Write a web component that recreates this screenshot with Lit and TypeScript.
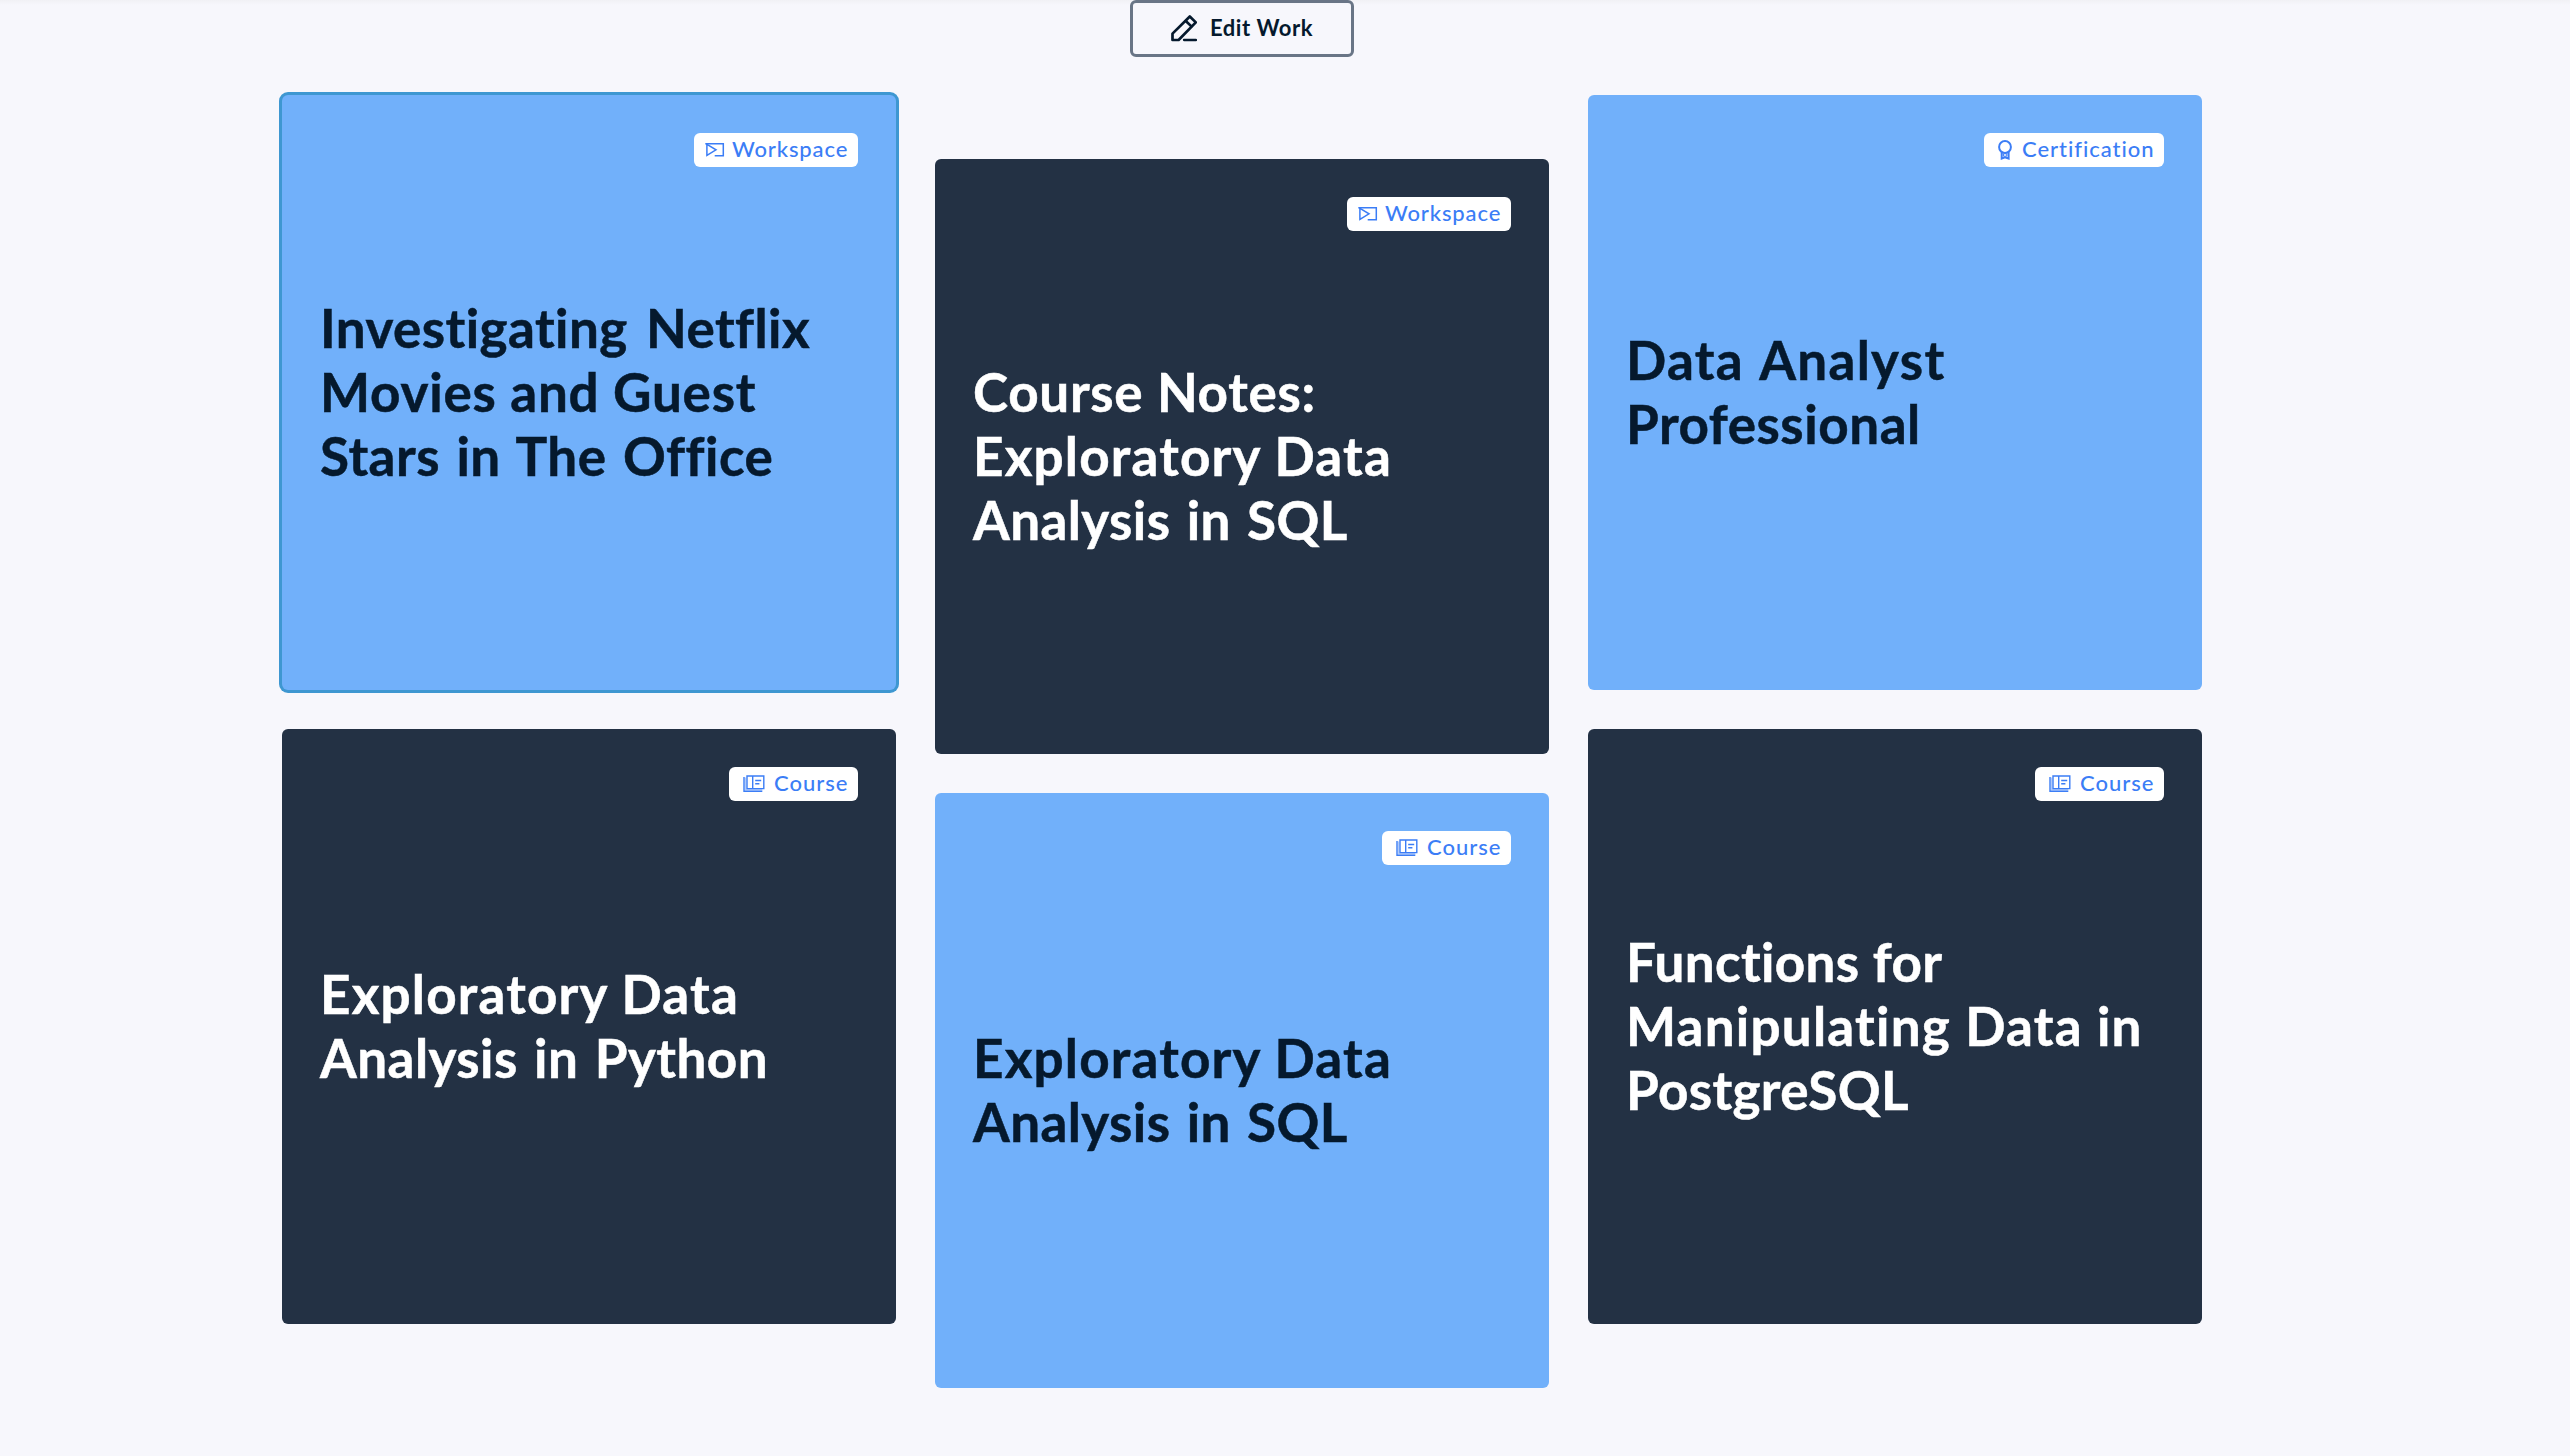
import { LitElement, html, css, svg } from "lit";
import { customElement, property } from "lit/decorators.js";
import { classMap } from "lit/directives/class-map.js";
import { styleMap } from "lit/directives/style-map.js";

type Kind = "workspace" | "certification" | "course";
interface Line { text: string; spacing: number; word: number; }
interface Work { kind: Kind; dark: boolean; active?: boolean; lines: Line[]; }

const ln = (text: string, spacing: number, word = 0): Line => ({ text, spacing, word });

const COLUMNS: Work[][] = [
  [
    { kind: "workspace", dark: false, active: true, lines: [ln("Investigating Netflix", 0.43, 5), ln("Movies and Guest", 0.78), ln("Stars in The Office", 0.5, 3)] },
    { kind: "course", dark: true, lines: [ln("Exploratory Data", 1.2), ln("Analysis in Python", 0.45, 3)] },
  ],
  [
    { kind: "workspace", dark: true, lines: [ln("Course Notes:", 0.7), ln("Exploratory Data", 1.2), ln("Analysis in SQL", 0.4, 3)] },
    { kind: "course", dark: false, lines: [ln("Exploratory Data", 1.2), ln("Analysis in SQL", 0.4, 3)] },
  ],
  [
    { kind: "certification", dark: false, lines: [ln("Data Analyst", 1.28, 3), ln("Professional", 0.55)] },
    { kind: "course", dark: true, lines: [ln("Functions for", 0.36), ln("Manipulating Data in", 1.22), ln("PostgreSQL", 0.36)] },
  ],
];

const LABELS: Record<Kind, string> = { workspace: "Workspace", certification: "Certification", course: "Course" };

const ICONS = {
  workspace: svg`<svg width="20" height="16" viewBox="0 0 20 16" fill="none" stroke="currentColor" stroke-width="1.5"><path d="M0.3 1.7H18.3V13.7H9.7"/><path d="M1.9 1.7V13.5L11 7.8L1.2 1.8"/></svg>`,
  certification: svg`<svg width="14" height="20" viewBox="0 0 14 20" fill="none" stroke="currentColor" stroke-width="2"><circle cx="7" cy="7" r="5.9"/><path d="M3.7 12V18.6L7 17.4L10.6 18.6V12"/><path d="M5.4 13.8H8.8V16.2H5.4Z" stroke-width="1"/></svg>`,
  course: svg`<svg width="22" height="18" viewBox="0 0 22 18" fill="none" stroke="currentColor" stroke-width="1.4"><path d="M4 1H20.8V13.6H4Z"/><path d="M9.7 1V13.6"/><path d="M12.2 5.5H18.2M12.2 8.8H16.4"/><path d="M1 2V16.2H19.3"/><path d="M2.5 2.4V14.8H19.3" opacity="0.4"/></svg>`,
};

@customElement("work-card")
class WorkCard extends LitElement {
  @property({ attribute: false }) work!: Work;
  static styles = css`
    :host { display: block; }
    .card {
      display: grid; box-sizing: border-box; width: 614px; height: 595px; padding: 38px;
      border-radius: 6px; background: #71b0fa; color: #05192d;
    }
    .dark { background: #233144; color: #fff; }
    .active { box-shadow: 0 0 0 3px #3e97d1; }
    .badge {
      grid-area: 1 / 1; justify-self: end; align-self: start; display: flex; align-items: center;
      box-sizing: border-box; height: 34px; border-radius: 6px; background: #fff; color: #3b7df6;
      font: 500 22px/32px Lato, "Open Sans", sans-serif; white-space: nowrap;
    }
    .badge svg { display: block; flex: none; }
    .label { padding-bottom: 2px; }
    .workspace { width: 164px; padding-left: 11px; gap: 7px; letter-spacing: 0.86px; }
    .certification { width: 180px; padding-left: 14px; gap: 10px; letter-spacing: 0.95px; }
    .course { width: 129px; padding-left: 14px; gap: 9px; letter-spacing: 1px; }
    .title {
      grid-area: 1 / 1; align-self: center; margin: 0; padding-bottom: 2px;
      font: 700 53px/64px Lato, "Open Sans", sans-serif; white-space: nowrap;
      -webkit-text-stroke: 0.5px currentColor;
    }
    .line { display: block; }
  `;
  render() {
    const { kind, dark, active, lines } = this.work;
    return html`<article class=${classMap({ card: true, dark, active: !!active })}>
      <h2 class="title">${lines.map(l => html`<span class="line" style=${styleMap({ letterSpacing: `${l.spacing}px`, wordSpacing: `${l.word}px` })}>${l.text}</span>`)}</h2>
      <span class="badge ${kind}">${ICONS[kind]}<span class="label">${LABELS[kind]}</span></span>
    </article>`;
  }
}

@customElement("app-root")
class AppRoot extends LitElement {
  static styles = css`
    :host { display: block; }
    .page {
      display: flex; flex-direction: column; align-items: center; box-sizing: border-box;
      height: 1456px; padding-right: 86px; overflow: hidden;
      background: linear-gradient(#f1f1f5, #f7f7fc 5px);
    }
    .edit {
      display: flex; align-items: center; box-sizing: border-box; width: 224px; height: 57px; flex: none;
      padding: 0 0 0 38px; gap: 13px; border: 3px solid #697586; border-radius: 6px; background: transparent;
      color: #05192d; font: 700 22px/30px Lato, "Open Sans", sans-serif; letter-spacing: 0.55px; white-space: nowrap;
    }
    .edit svg { display: block; flex: none; }
    .edit span { padding-bottom: 1px; }
    .columns { display: flex; gap: 39px; margin-top: 38px; }
    .column { display: flex; flex-direction: column; gap: 39px; }
    .offset { padding-top: 64px; }
  `;
  render() {
    return html`<main class="page">
      <button class="edit">
        <svg width="26" height="27" viewBox="0 0 26 27" fill="none" stroke="currentColor" stroke-width="2.7" stroke-linejoin="round" stroke-linecap="round"><path d="M1.5 25V18.6L18.8 1.5L24.8 7.4L7.6 25Z"/><path d="M14.8 6L20.4 11.4"/><path d="M13 25H25" stroke-width="2.3"/></svg>
        <span>Edit Work</span>
      </button>
      <div class="columns">
        ${COLUMNS.map((col, i) => html`<div class=${classMap({ column: true, offset: i === 1 })}>
          ${col.map(w => html`<work-card .work=${w}></work-card>`)}
        </div>`)}
      </div>
    </main>`;
  }
}
